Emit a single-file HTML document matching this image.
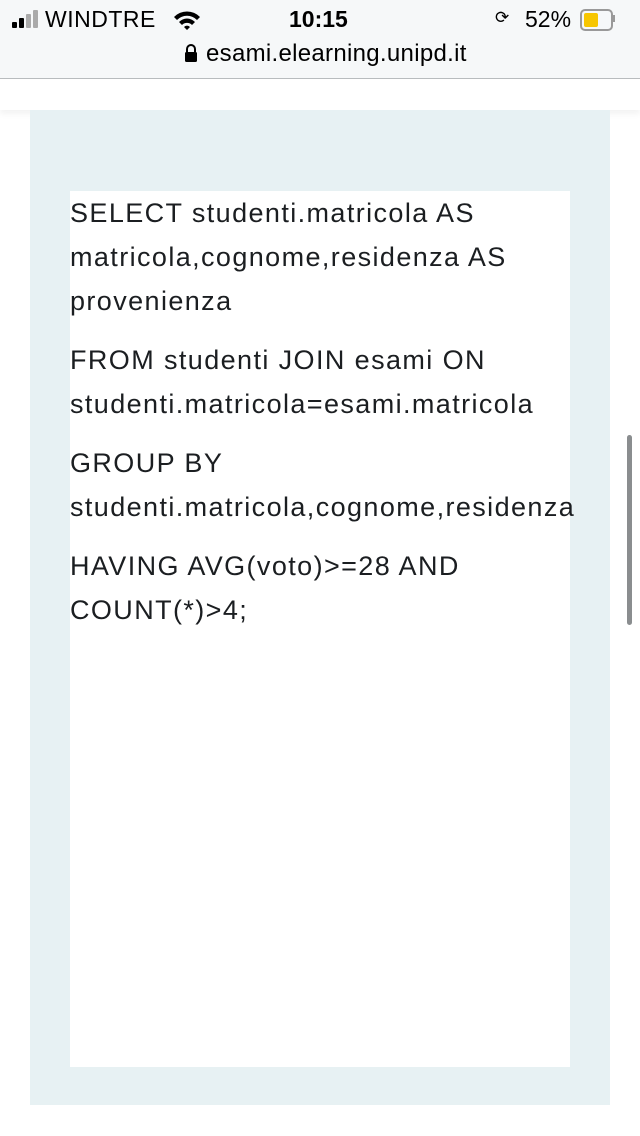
<!DOCTYPE html>
<html><head><meta charset="utf-8"><style>
body{margin:0;width:640px;height:1136px;background:#fff;font-family:"Liberation Sans",sans-serif;position:relative;overflow:hidden}
.top{position:absolute;left:0;top:0;width:640px;height:78px;background:#f6f8f9;border-bottom:1px solid #b9bcbe}
.t{position:absolute;color:#000;white-space:nowrap}
.panel{position:absolute;left:30px;top:110px;width:580px;height:995px;background:#e7f1f3}
.box{position:absolute;left:70px;top:191px;width:500px;height:876px;background:#fff}
.box p{margin:0 0 15px 0;font-size:27px;letter-spacing:1.4px;line-height:44px;color:#1b1e21;width:525px}
.shadow{position:absolute;left:0;top:79px;width:640px;height:31px;background:#fff;box-shadow:0 4px 6px rgba(0,0,0,0.05)}
</style></head><body>
<div class="top">
 <div style="position:absolute;left:12px;top:22px;width:5px;height:6px;background:#000;border-radius:1px"></div>
 <div style="position:absolute;left:19px;top:18px;width:5px;height:10px;background:#000;border-radius:1px"></div>
 <div style="position:absolute;left:26px;top:14px;width:5px;height:14px;background:#aaa;border-radius:1px"></div>
 <div style="position:absolute;left:33px;top:10px;width:5px;height:18px;background:#aaa;border-radius:1px"></div>
 <div class="t" style="left:45px;top:6px;font-size:23px;letter-spacing:0.5px">WINDTRE</div>
 <svg style="position:absolute;left:172px;top:9px" width="30" height="22" viewBox="0 0 30 22"><path d="M2 8 A18 18 0 0 1 28 8 L25 11 A14 14 0 0 0 5 11Z M7 13 A11 11 0 0 1 23 13 L20 16 A7 7 0 0 0 10 16Z M12 18 A4 4 0 0 1 18 18 L15 21Z" fill="#000"/></svg>
 <div class="t" style="left:289px;top:6px;font-size:23px;font-weight:bold">10:15</div>
 <div class="t" style="left:495px;top:8px;font-size:17px">⟳</div>
 <div class="t" style="left:525px;top:6px;font-size:23px">52%</div>
 <div style="position:absolute;left:580px;top:9px;width:29px;height:18px;border:2px solid #999;border-radius:5px"></div>
 <div style="position:absolute;left:584px;top:13px;width:14px;height:14px;background:#f7c600;border-radius:2px"></div>
 <div style="position:absolute;left:613px;top:15px;width:2px;height:7px;background:#999"></div>
 <svg style="position:absolute;left:184px;top:43px" width="14" height="20" viewBox="0 0 14 20"><path d="M3 9V6a4 4 0 0 1 8 0v3" stroke="#000" stroke-width="2" fill="none"/><rect x="1" y="9" width="12" height="10" rx="1.5" fill="#000"/></svg>
 <div class="t" style="left:206px;top:40px;font-size:24px;letter-spacing:0.3px">esami.elearning.unipd.it</div>
</div>
<div class="shadow"></div>
<div class="panel"></div>
<div class="box"><div>
<p>SELECT studenti.matricola AS matricola,cognome,residenza AS provenienza</p>
<p>FROM studenti JOIN esami ON studenti.matricola=esami.matricola</p>
<p>GROUP BY studenti.matricola,cognome,residenza</p>
<p>HAVING AVG(voto)&gt;=28 AND COUNT(*)&gt;4;</p>
</div></div>
<div style="position:absolute;left:627px;top:435px;width:5px;height:190px;background:#8a8d8f;border-radius:3px"></div>
</body></html>
